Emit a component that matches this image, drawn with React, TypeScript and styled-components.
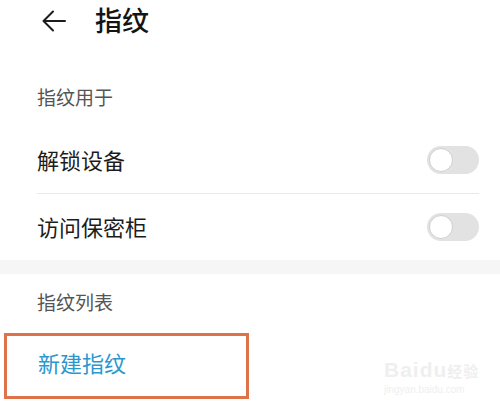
import React from "react";
import styled, { createGlobalStyle } from "styled-components";

const Global = createGlobalStyle`
  html, body { margin: 0; padding: 0; background: #ffffff; }
  body { font-family: "Noto Sans CJK SC", "Noto Sans", sans-serif; }
`;

const Page = styled.div`
  position: relative;
  width: 500px;
  height: 406px;
  overflow: hidden;
  background: #ffffff;
  display: flex;
  flex-direction: column;
`;

const Header = styled.header`
  height: 40px;
  padding-left: 41px;
  display: flex;
  align-items: center;
  flex-shrink: 0;
`;

const BackButton = styled.span`
  width: 25px;
  height: 24px;
  display: flex;
  align-items: center;
  margin-top: 2px;
`;

const Title = styled.h1`
  margin: 0 0 0 29px;
  font-size: 27px;
  line-height: 40px;
  font-weight: 500;
  color: #141414;
`;

const SubHeader = styled.div<{ $top: number; $bottom: number }>`
  padding: ${(p) => p.$top}px 0 ${(p) => p.$bottom}px 37px;
  font-size: 19px;
  line-height: 44px;
  color: #555555;
  flex-shrink: 0;
`;

const Row = styled.div`
  height: 66px;
  padding: 0 21px 0 37px;
  display: flex;
  align-items: center;
  justify-content: space-between;
  flex-shrink: 0;
`;

const RowLabel = styled.span<{ $accent?: boolean }>`
  font-size: 22px;
  line-height: 30px;
  margin-top: -2px;
  color: ${(p) => (p.$accent ? "#2b97cf" : "#1c1c1c")};
`;

const Divider = styled.div`
  height: 1px;
  margin: 0 21px 0 37px;
  background: #e9e9e9;
  flex-shrink: 0;
`;

const Band = styled.div`
  height: 14px;
  background: #f6f6f6;
  flex-shrink: 0;
`;

const Toggle = styled.span`
  position: relative;
  width: 52px;
  height: 28px;
  border-radius: 14px;
  background: #e2e2e2;
  display: flex;
  align-items: center;
  padding-left: 2px;
  box-sizing: border-box;
`;

const Knob = styled.span`
  width: 24px;
  height: 24px;
  border-radius: 50%;
  background: #ffffff;
  border: 1.5px solid #cfcfcf;
  box-sizing: border-box;
`;

const Highlight = styled.div`
  margin-left: 4px;
  width: 245px;
  height: 66px;
  box-sizing: border-box;
  border: 3px solid #de7249;
  padding: 0 0 7px 31px;
  display: flex;
  align-items: center;
  flex-shrink: 0;
`;

const Watermark = styled.div`
  position: absolute;
  left: 384px;
  top: 358px;
  display: flex;
  flex-direction: column;
  color: #efefef;
  font-family: "Liberation Sans", sans-serif;
  pointer-events: none;
`;

const WatermarkMain = styled.span`
  font-size: 21px;
  font-weight: bold;
  line-height: 24px;
  letter-spacing: 1px;
  span { font-family: "Noto Sans CJK SC", sans-serif; font-size: 15px; line-height: 24px; }
`;

const WatermarkSub = styled.span`
  font-size: 10px;
  line-height: 13px;
`;

function Switch() {
  return (
    <Toggle>
      <Knob />
    </Toggle>
  );
}

export default function App() {
  return (
    <Page>
      <Global />
      <Header>
        <BackButton>
          <svg width="25" height="22" viewBox="0 0 25 22" fill="none">
            <path d="M24 11H2.5M12 1.5 2.5 11l9.5 9.5" stroke="#1c1c1c" strokeWidth="2" strokeLinecap="round" strokeLinejoin="round" />
          </svg>
        </BackButton>
        <Title>指纹</Title>
      </Header>
      <SubHeader $top={35} $bottom={8}>指纹用于</SubHeader>
      <Row>
        <RowLabel>解锁设备</RowLabel>
        <Switch />
      </Row>
      <Divider />
      <Row>
        <RowLabel>访问保密柜</RowLabel>
        <Switch />
      </Row>
      <Band />
      <SubHeader $top={6} $bottom={9}>指纹列表</SubHeader>
      <Highlight>
        <RowLabel $accent>新建指纹</RowLabel>
      </Highlight>
      <Watermark>
        <WatermarkMain>
          Baidu<span>经验</span>
        </WatermarkMain>
        <WatermarkSub>jingyan.baidu.com</WatermarkSub>
      </Watermark>
    </Page>
  );
}
